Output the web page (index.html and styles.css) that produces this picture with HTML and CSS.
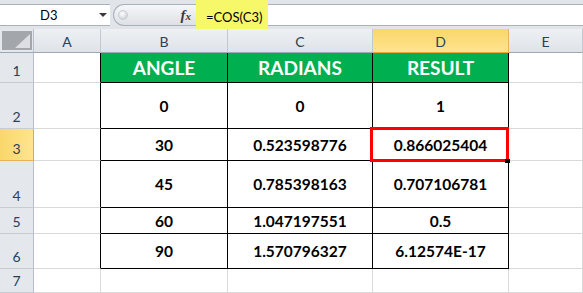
FILE: index.html
```html
<!DOCTYPE html>
<html lang="en">
<head>
<meta charset="utf-8">
<title>COS in Excel</title>
<link rel="stylesheet" href="styles.css">
</head>
<body>
<div class="app">
  <div class="fbar">
    <div class="namebox"><span class="ref">D3</span><span class="caret"></span></div>
    <div class="grip"><span class="knob"></span><span class="fx">f<span class="fx-x">x</span></span></div>
    <div class="hl">=COS(C3)</div>
    <div class="field"></div>
  </div>

  <div class="sheet">
    <div class="corner">
      <svg width="33" height="23" viewBox="0 0 33 23">
        <rect x="2" y="2" width="30" height="19" fill="#a3a6aa"/>
        <polygon points="30,5 30,19 15,19" fill="#dcdee1"/>
      </svg>
    </div>
    <div class="ch">A</div>
    <div class="ch">B</div>
    <div class="ch">C</div>
    <div class="ch on">D</div>
    <div class="ch">E</div>

    <div class="rh">1</div>
    <div class="c edge"></div>
    <div class="c t g">ANGLE</div>
    <div class="c t g">RADIANS</div>
    <div class="c t g">RESULT</div>
    <div class="c"></div>

    <div class="rh">2</div>
    <div class="c edge"></div>
    <div class="c t">0</div>
    <div class="c t">0</div>
    <div class="c t">1</div>
    <div class="c"></div>

    <div class="rh on">3</div>
    <div class="c edge"></div>
    <div class="c t">30</div>
    <div class="c t">0.523598776</div>
    <div class="c t sel">0.866025404<span class="selbox"></span><span class="handle"></span></div>
    <div class="c"></div>

    <div class="rh">4</div>
    <div class="c edge"></div>
    <div class="c t">45</div>
    <div class="c t">0.785398163</div>
    <div class="c t">0.707106781</div>
    <div class="c"></div>

    <div class="rh">5</div>
    <div class="c edge"></div>
    <div class="c t">60</div>
    <div class="c t">1.047197551</div>
    <div class="c t">0.5</div>
    <div class="c"></div>

    <div class="rh">6</div>
    <div class="c edge"></div>
    <div class="c t">90</div>
    <div class="c t">1.570796327</div>
    <div class="c t">6.12574E-17</div>
    <div class="c"></div>

    <div class="rh">7</div>
    <div class="c"></div>
    <div class="c"></div>
    <div class="c"></div>
    <div class="c"></div>
    <div class="c"></div>
  </div>
</div>
</body>
</html>
```

FILE: styles.css
```css
* {
  box-sizing: border-box;
}

html, body {
  margin: 0;
  padding: 0;
  background: #ffffff;
}

body {
  font-family: "Lato", "Liberation Sans", sans-serif;
  color: #000;
  width: 583px;
  height: 293px;
  overflow: hidden;
}

/* ---------- formula bar ---------- */
.fbar {
  display: flex;
  height: 29px;
  background: #e1e4e9;
}

.namebox {
  width: 110px;
  height: 22px;
  margin-top: 4px;
  background: #fff;
  border-top: 1px solid #a9b1bb;
  border-bottom: 1px solid #a9b1bb;
  display: flex;
  align-items: center;
  padding-left: 40px;
  font-size: 13px;
}

.caret {
  margin-left: auto;
  margin-right: 3px;
  width: 0;
  height: 0;
  border-left: 4px solid transparent;
  border-right: 4px solid transparent;
  border-top: 4px solid #3a3a3a;
}

.grip {
  width: 83px;
  height: 22px;
  margin-top: 4px;
  margin-left: 3px;
  border: 1px solid #a9b1bb;
  border-right: 0;
  border-radius: 11px 0 0 11px;
  background: linear-gradient(#f6f7f9, #dde0e5);
  display: flex;
  align-items: center;
  padding-left: 4px;
}

.knob {
  width: 10px;
  height: 10px;
  border-radius: 50%;
  background: radial-gradient(circle at 40% 35%, #ffffff 0, #e3e5e8 45%, #c4c8cd 100%);
  border: 1px solid #c9cdd2;
}

.fx {
  margin-left: auto;
  margin-right: 5px;
  font-family: "Liberation Serif", serif;
  font-style: italic;
  font-weight: bold;
  font-size: 15px;
  color: #3b3b3b;
  line-height: 1;
}

.fx-x {
  font-size: 11px;
}

.hl {
  width: 72px;
  background: #f7f76a;
  display: flex;
  align-items: center;
  padding: 4px 0 0 10px;
  font-size: 13px;
}

.field {
  flex: 1;
  height: 22px;
  margin-top: 4px;
  background: #fff;
  border-top: 1px solid #a9b1bb;
  border-bottom: 1px solid #a9b1bb;
}

/* ---------- worksheet ---------- */
.sheet {
  display: grid;
  grid-template-columns: 34px 67px 127px 145px 136px 74px;
  grid-template-rows: 24px 30px 46px 32px 47px 26px 35px 24px;
}

.corner {
  background: #e4e7eb;
  border-right: 1px solid #b7bec7;
  border-bottom: 1px solid #9ea8b4;
}

.corner svg {
  display: block;
}

.ch {
  background: linear-gradient(#eef0f3, #dfe3e8);
  border-right: 1px solid #c3c9d0;
  border-bottom: 1px solid #9ea8b4;
  display: flex;
  align-items: center;
  justify-content: center;
  font-size: 14px;
  color: #27405e;
  padding-top: 1px;
}

.ch.on {
  background: linear-gradient(#f9d76a, #ffe48f);
  border-bottom-color: #e9a83a;
  border-right-color: #e9b358;
}

.rh {
  background: #e4e7eb;
  border-right: 1px solid #b7bec7;
  border-bottom: 1px solid #c7ccd3;
  display: flex;
  align-items: flex-end;
  justify-content: center;
  font-size: 14px;
  color: #27405e;
  padding-bottom: 3px;
}

.rh.on {
  background: linear-gradient(90deg, #f9d76a, #ffe48f);
  border-right-color: #e9a83a;
  border-bottom-color: #e9b358;
}

.c {
  border-right: 1px solid #d9d9d9;
  border-bottom: 1px solid #d9d9d9;
  background: #fff;
}

.c.edge {
  border-right-color: #000;
}

.c.t {
  border-right-color: #000;
  border-bottom-color: #000;
  display: flex;
  align-items: center;
  justify-content: center;
  font-weight: bold;
  font-size: 15.5px;
}

.c.g {
  background: #00b050;
  color: #fff;
  font-size: 19px;
}

/* active cell outline */
.sel {
  position: relative;
}

.selbox {
  position: absolute;
  left: -3px;
  top: -2px;
  width: 139px;
  height: 35px;
  border: 3px solid #ff0000;
}

.handle {
  position: absolute;
  left: 132px;
  top: 30px;
  width: 5px;
  height: 4px;
  background: #000;
}
```
